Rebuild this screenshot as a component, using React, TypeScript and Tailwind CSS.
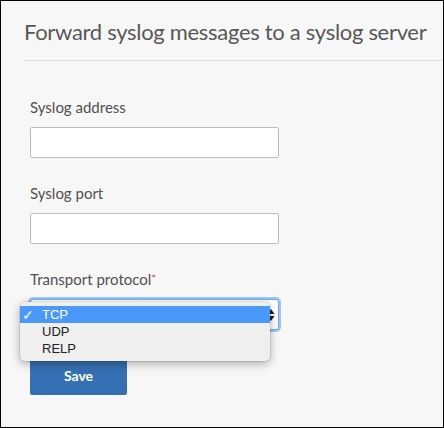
import React from "react";

const fields = [
  { label: "Syslog address" },
  { label: "Syslog port" },
];

const options = ["TCP", "UDP", "RELP"];

function UpDown() {
  return (
    <svg width="8" height="14" viewBox="0 0 8 14" className="block">
      <path d="M4 1 L7.5 6 L0.5 6 Z" fill="#222" />
      <path d="M4 13 L7.5 8 L0.5 8 Z" fill="#222" />
    </svg>
  );
}

export default function App() {
  return (
    <div className="w-[444px] h-[428px] border border-black bg-[#f7f7f7] overflow-hidden font-['Lato','Liberation_Sans',sans-serif]">
      {/* Header */}
      <div className="pl-[23px] pt-[15px]">
        <h2 className="text-[22px] leading-[32px] tracking-[-0.3px] text-[#585858] font-normal whitespace-nowrap">
          Forward syslog messages to a syslog server
        </h2>
        <div className="mt-[12px] border-t border-[#dcdcdc]" />
      </div>

      {/* Form */}
      <form className="px-[29px] pt-[36px]">
        {fields.map((f) => (
          <div key={f.label} className="mb-[25px]">
            <label className="block text-[15px] leading-[20px] text-[#505050] mb-[10px]">
              {f.label}
            </label>
            <input
              type="text"
              className="block w-[249px] h-[31px] bg-white border border-[#bbb] rounded-[2px] outline-none"
            />
          </div>
        ))}

        <div className="mb-[25px]">
          <label className="block text-[15px] leading-[20px] text-[#505050] mb-[10px]">
            Transport protocol
            <span className="text-[#e5484d] text-[12px] align-top">*</span>
          </label>

          <div className="relative w-[249px] h-[31px]">
            <div className="w-full h-full bg-white border border-[#6aa9f0] rounded-[3px] shadow-[0_0_0_2px_rgba(90,155,240,0.55)] flex items-center justify-end pr-[3px]">
              <UpDown />
            </div>

            {/* Native popup list */}
            <div className="absolute left-[-10px] top-[3px] w-[250px] py-[4px] bg-[#efefef] rounded-[5px] shadow-[0_3px_10px_rgba(0,0,0,0.3),0_0_0_1px_rgba(0,0,0,0.08)] font-['Liberation_Sans',sans-serif] text-[13px] z-10">
              {options.map((o, i) => (
                <div
                  key={o}
                  className={
                    i === 0
                      ? "h-[17px] flex items-center bg-[#4a98f7] text-white"
                      : "h-[17px] flex items-center text-[#222]"
                  }
                >
                  <span className="w-[22px] pl-[2px] text-[14px] leading-none">
                    {i === 0 ? "✓" : ""}
                  </span>
                  <span className="leading-none">{o}</span>
                </div>
              ))}
            </div>
          </div>
        </div>

        <button
          type="button"
          className="w-[97px] h-[40px] bg-[#3570b2] text-white font-bold text-[14px] rounded-[2px] font-['Lato','Liberation_Sans',sans-serif]"
        >
          Save
        </button>
      </form>
    </div>
  );
}
